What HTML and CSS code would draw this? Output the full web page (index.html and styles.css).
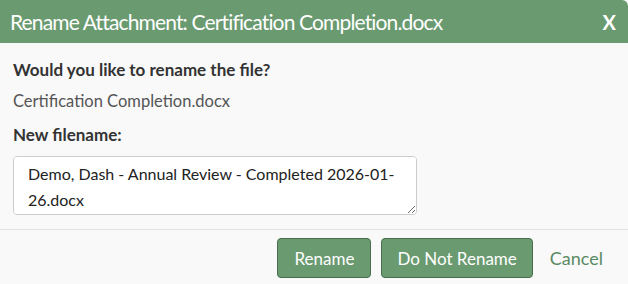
FILE: index.html
```html
<!DOCTYPE html>
<html lang="en">
<head>
    <meta charset="UTF-8">
    <title>Rename Attachment</title>
    <link rel="stylesheet" href="styles.css">
</head>
<body>

<div class="dialog">
    <!-- title bar -->
    <div class="dialog-header">
        <span class="dialog-title">Rename Attachment: Certification Completion.docx</span>
        <span class="dialog-close">X</span>
    </div>

    <div class="dialog-body">
        <div class="label">Would you like to rename the file?</div>
        <div class="current-name">Certification Completion.docx</div>
        <div class="label">New filename:</div>
        <textarea class="new-name">Demo, Dash - Annual Review - Completed 2026-01-26.docx</textarea>
    </div>

    <div class="dialog-footer">
        <button class="btn btn-rename">Rename</button>
        <button class="btn">Do Not Rename</button>
        <a class="cancel" href="#">Cancel</a>
    </div>
</div>

</body>
</html>
```

FILE: styles.css
```css
body, html {
    margin: 0;
    padding: 0;
    height: 100%;
}

body {
    font-family: Lato, "Noto Sans", sans-serif;
    background-color: #f9f9f9;
    color: #333;
}

.dialog {
    width: 628px;
    height: 284px;
    overflow: hidden;
}

.dialog-header {
    display: flex;
    justify-content: space-between;
    align-items: center;
    height: 43px;
    padding: 0 12px 0 10px;
    background-color: #6a9a70;
    color: #fff;
    border-top-right-radius: 6px;
}

.dialog-title {
    font-size: 21px;
    letter-spacing: -0.85px;
}

.dialog-close {
    font-size: 20px;
    font-weight: bold;
}

.dialog-body {
    display: flex;
    flex-direction: column;
    align-items: flex-start;
    padding: 17px 13px 14px;
    border-bottom: 1px solid #e2e2e2;
}

.label {
    font-size: 17px;
    line-height: 20px;
    font-weight: bold;
    margin-bottom: 11px;
}

.current-name {
    font-size: 16.5px;
    line-height: 20px;
    color: #555;
    margin-bottom: 14px;
}

.new-name {
    width: 404px;
    height: 59px;
    box-sizing: border-box;
    padding: 4px 14px;
    font-family: inherit;
    font-size: 16px;
    line-height: 26px;
    color: #222;
    background: #fff;
    border: 1px solid #ccc;
    border-radius: 4px;
    resize: vertical;
}

.dialog-footer {
    display: flex;
    justify-content: flex-end;
    align-items: center;
    gap: 10px;
    padding: 8px 25px 0;
}

.btn {
    height: 40px;
    padding: 0 15px;
    font-family: inherit;
    font-size: 17px;
    color: #fff;
    background-color: #6a9a70;
    border: 1px solid #466e4c;
    border-radius: 4px;
    cursor: pointer;
}

.btn-rename {
    padding: 0 16px;
}

.cancel {
    margin-left: 7px;
    font-size: 18px;
    color: #5a8a62;
    text-decoration: none;
}
```
